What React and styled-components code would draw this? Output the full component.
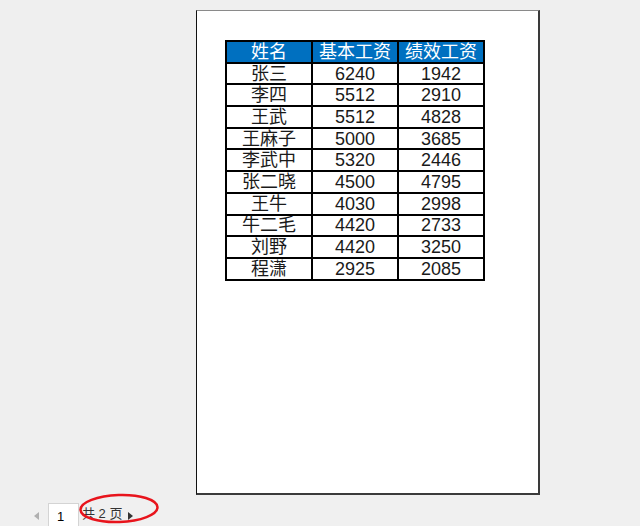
import React from "react";
import styled, { createGlobalStyle } from "styled-components";

const Global = createGlobalStyle`
  html, body {
    margin: 0;
    padding: 0;
    background: #f0f0f0;
    font-family: "Liberation Sans", "Noto Sans CJK SC", sans-serif;
  }
`;

const Screen = styled.div`
  position: relative;
  width: 640px;
  height: 526px;
  display: flex;
  flex-direction: column;
  overflow: hidden;
`;

const Viewport = styled.div`
  height: 500px;
  padding: 10px 0 0 196px;
  box-sizing: border-box;
  background: #efefef;
`;

const Page = styled.div`
  width: 344px;
  height: 485px;
  box-sizing: border-box;
  background: #fff;
  border-top: 1px solid #8a8a8a;
  border-left: 1px solid #111;
  border-right: 2px solid #3a3a3a;
  border-bottom: 2px solid #3a3a3a;
  padding: 29px 0 0 28px;
`;

const Table = styled.table`
  border-collapse: collapse;
  font-family: "Liberation Sans", "Noto Sans CJK SC", sans-serif;
  font-size: 18px;
  line-height: 1;
`;

const Cell = styled.td`
  border: 2px solid #000;
  width: ${p => p.w}px;
  height: 19.7px;
  padding: 0;
  text-align: center;
  vertical-align: middle;
  color: #1a1a1a;
  font-weight: 400;
  white-space: nowrap;
`;

const Head = styled(Cell).attrs({ as: "th" })`
  background: #0070c0;
  color: #fff;
`;

const Bar = styled.div`
  height: 26px;
  display: flex;
  align-items: flex-end;
  background: #f0f0f0;
  padding-left: 34px;
  font-size: 13px;
  color: #333;
`;

const Arrow = styled.span`
  width: 0;
  height: 0;
  border-top: 4px solid transparent;
  border-bottom: 4px solid transparent;
  ${p => p.dir === "left"
    ? `border-right: 5px solid #b0b0b0;`
    : `border-left: 5px solid #333;`}
  margin: 0 ${p => p.mr}px 6px ${p => p.ml}px;
`;

const PageBox = styled.div`
  width: 31px;
  height: 23px;
  box-sizing: border-box;
  background: #fff;
  border: 1px solid #d4d4d4;
  border-bottom: none;
  color: #000;
  padding: 5px 0 0 8px;
  font-size: 13px;
`;

const PageInfo = styled.span`
  margin: 0 0 4px 3px;
  color: #333;
`;

const Mark = styled.svg`
  position: absolute;
  left: 78px;
  top: 492px;
`;

const rows = [
  ["张三", 6240, 1942],
  ["李四", 5512, 2910],
  ["王武", 5512, 4828],
  ["王麻子", 5000, 3685],
  ["李武中", 5320, 2446],
  ["张二晓", 4500, 4795],
  ["王牛", 4030, 2998],
  ["牛二毛", 4420, 2733],
  ["刘野", 4420, 3250],
  ["程潇", 2925, 2085],
];

const widths = [84, 84, 84];

export default function App() {
  return (
    <Screen>
      <Global />
      <Viewport>
        <Page>
          <Table>
            <thead>
              <tr>
                {["姓名", "基本工资", "绩效工资"].map((h, i) => (
                  <Head key={h} w={widths[i]}>{h}</Head>
                ))}
              </tr>
            </thead>
            <tbody>
              {rows.map(r => (
                <tr key={r[0]}>
                  {r.map((v, i) => (
                    <Cell key={i} w={widths[i]}>{v}</Cell>
                  ))}
                </tr>
              ))}
            </tbody>
          </Table>
        </Page>
      </Viewport>
      <Bar>
        <Arrow dir="left" ml={0} mr={9} />
        <PageBox>1</PageBox>
        <PageInfo>共 2 页</PageInfo>
        <Arrow dir="right" ml={6} mr={0} />
      </Bar>
      <Mark width="82" height="34" viewBox="0 0 82 34">
        <ellipse cx="41" cy="16.5" rx="38.5" ry="13.5" fill="none" stroke="#e8141c" strokeWidth="2.5" transform="rotate(-2 41 16.5)" />
      </Mark>
    </Screen>
  );
}
